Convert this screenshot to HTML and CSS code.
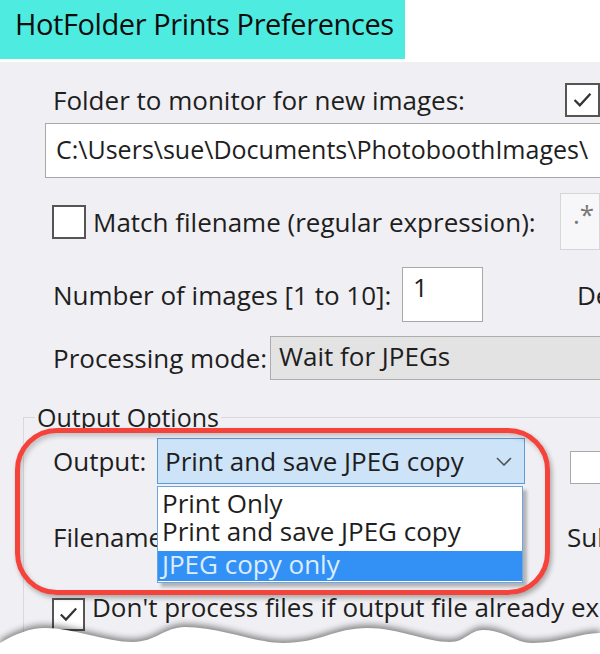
FILE: index.html
```html
<!DOCTYPE html>
<html lang="en">
<head>
    <meta charset="UTF-8">
    <meta name="viewport" content="width=device-width, initial-scale=1.0">
    <title>HotFolder Prints Preferences</title>
    <link rel="stylesheet" href="styles.css">
</head>
<body>
    <div class="titlebar">HotFolder Prints Preferences</div>

    <div class="dialog">
        <div class="row row-folder">
            <span class="label">Folder to monitor for new images:</span>
            <span class="check">
                <svg viewBox="0 0 34 34"><path d="M8 17 L14 23 L26 10"/></svg>
            </span>
        </div>

        <div class="textbox path">C:\Users\sue\Documents\PhotoboothImages\</div>

        <div class="row row-match">
            <span class="check"></span>
            <span class="label">Match filename (regular expression):</span>
            <span class="textbox regex">.*</span>
        </div>

        <div class="row row-number">
            <span class="label number-label">Number of images [1 to 10]:</span>
            <span class="textbox count">1</span>
            <span class="label delay">De</span>
        </div>

        <div class="row row-mode">
            <span class="label mode-label">Processing mode:</span>
            <span class="combo mode">Wait for JPEGs</span>
        </div>

        <fieldset class="group">
            <legend>Output Options</legend>

            <div class="row row-output">
                <span class="label output-label">Output:</span>
                <div class="combo-wrap">
                    <span class="combo focused">
                        Print and save JPEG copy
                        <svg class="chevron" viewBox="0 0 16 9"><path d="M1 1 L8 8 L15 1"/></svg>
                    </span>
                    <ul class="dropdown">
                        <li>Print Only</li>
                        <li>Print and save JPEG copy</li>
                        <li class="selected">JPEG copy only</li>
                    </ul>
                </div>
                <span class="textbox side"></span>
            </div>

            <div class="row row-filename">
                <span class="label filename-label">Filename</span>
                <span class="label">Sub</span>
            </div>

            <div class="row row-skip">
                <span class="check">
                    <svg viewBox="0 0 34 34"><path d="M8 17 L14 23 L26 10"/></svg>
                </span>
                <span class="label">Don't process files if output file already exists</span>
            </div>
        </fieldset>

        <div class="ring"></div>

        <svg class="torn" viewBox="0 0 600 40" preserveAspectRatio="none">
            <path d="M0,29 C15,20 30,14 45,14 C75,14 105,28 133,28 C155,28 165,13 185,13 C220,13 255,29 283,29 C320,29 335,14 367,14 C400,14 425,28 450,28 C465,28 470,16 483,16 C505,16 515,29 533,29 C560,29 580,19 600,19 L600,40 L0,40 Z"/>
        </svg>
    </div>
</body>
</html>
```

FILE: styles.css
```css
body {
    margin: 0;
    width: 600px;
    height: 654px;
    overflow: hidden;
    background: #ffffff;
    font-family: "Open Sans", "Noto Sans", sans-serif;
    color: #1e1e1e;
}

.titlebar {
    width: 390px;
    height: 59px;
    padding-left: 15px;
    background: #4debe0;
    color: #0d0d0d;
    font-size: 29px;
    letter-spacing: -0.4px;
    line-height: 48px;
    white-space: nowrap;
}

.dialog {
    margin-top: 3px;
    height: 592px;
    background: #f0eff3;
    position: relative;
    overflow: hidden;
    font-size: 26px;
}

.row {
    display: flex;
    align-items: center;
    white-space: nowrap;
    padding-left: 53px;
}

.label {
    line-height: 34px;
    flex-shrink: 0;
}

.check {
    width: 33px;
    height: 33px;
    box-sizing: border-box;
    border: 2px solid #555;
    background: #fff;
    flex-shrink: 0;
}

.check svg {
    width: 100%;
    height: 100%;
    display: block;
}

.check path {
    fill: none;
    stroke: #333;
    stroke-width: 2.6;
}

.textbox {
    box-sizing: border-box;
    background: #fff;
    border: 1px solid #a8a8a8;
    flex-shrink: 0;
}

.combo {
    box-sizing: border-box;
    border: 1px solid #adadad;
    background: #e3e3e3;
    flex-shrink: 0;
}

/* folder */
.row-folder {
    margin-top: 21px;
    height: 34px;
}

.row-folder .check {
    margin-left: auto;
    width: 35px;
    height: 34px;
}

.path {
    margin: 6px 0 0 45px;
    width: 600px;
    height: 55px;
    padding-left: 10px;
    font-size: 25px;
    line-height: 50px;
    white-space: nowrap;
}

/* match */
.row-match {
    margin-top: 15px;
    height: 57px;
    padding-left: 52px;
}

.row-match .check {
    width: 34px;
    height: 34px;
    margin-right: 7px;
}

.regex {
    margin-left: auto;
    width: 40px;
    height: 57px;
    background: #f7f7f9;
    border-color: #d6d6d6;
    color: #777;
    padding-left: 12px;
    line-height: 40px;
}

/* number */
.row-number {
    margin-top: 17px;
    height: 55px;
}

.number-label {
    width: 349px;
}

.count {
    width: 81px;
    height: 55px;
    padding-left: 10px;
    line-height: 38px;
}

.delay {
    margin-left: 94px;
}

/* mode */
.row-mode {
    margin-top: 14px;
    height: 44px;
}

.mode-label {
    width: 217px;
}

.mode {
    width: 340px;
    height: 44px;
    padding-left: 8px;
    line-height: 38px;
}

/* output options */
.group {
    margin: 24px 0 0 23px;
    padding: 0 0 40px;
    width: 620px;
    border: 1px solid #d9d9dc;
}

.group legend {
    margin-left: 11px;
    padding: 0 2px;
    font-size: 25px;
    line-height: 26px;
}

.group .row {
    padding-left: 29px;
}

.row-output {
    margin-top: 8px;
    height: 46px;
}

.output-label {
    width: 104px;
}

.combo-wrap {
    position: relative;
    flex-shrink: 0;
}

.focused {
    display: flex;
    align-items: center;
    width: 368px;
    height: 46px;
    padding: 0 12px 0 7px;
    background: #cde3f7;
    border-color: #5b9bd8;
    line-height: 40px;
}

.chevron {
    margin-left: auto;
    width: 16px;
    height: 9px;
}

.chevron path {
    fill: none;
    stroke: #555;
    stroke-width: 1.6;
}

.dropdown {
    position: absolute;
    top: 48px;
    left: 0;
    width: 366px;
    margin: 0;
    padding: 2px 0 1px;
    list-style: none;
    box-sizing: border-box;
    background: #fff;
    border: 1px solid #6aa5de;
    box-shadow: 4px 4px 3px rgba(0, 0, 0, 0.25);
    z-index: 2;
}

.dropdown li {
    padding-left: 4px;
    line-height: 28px;
}

.dropdown .selected {
    margin-top: 6px;
    background: #3391f5;
    color: #dcedff;
    line-height: 26px;
    padding-bottom: 4px;
}

.side {
    margin-left: 45px;
    width: 40px;
    height: 33px;
    align-self: flex-end;
}

.row-filename {
    margin-top: 36px;
    height: 34px;
}

.filename-label {
    width: 514px;
}

.row-skip {
    margin-top: 36px;
    height: 34px;
    padding-left: 28px !important;
}

.row-skip .check {
    align-self: flex-start;
    margin-top: 8px;
    margin-right: 7px;
}

/* annotation ring drawn over the screenshot */
.ring {
    position: absolute;
    top: 366px;
    left: 15px;
    width: 535px;
    height: 167px;
    box-sizing: border-box;
    border: 5px solid #f4433a;
    border-radius: 42px;
    box-shadow: 2px 3px 5px rgba(0, 0, 0, 0.3), inset 2px 3px 5px rgba(0, 0, 0, 0.2);
    z-index: 3;
}

.torn {
    position: absolute;
    left: 0;
    bottom: 0;
    width: 600px;
    height: 40px;
    z-index: 4;
    filter: drop-shadow(0 -3px 3px rgba(0, 0, 0, 0.45));
}

.torn path {
    fill: #fff;
}
```
